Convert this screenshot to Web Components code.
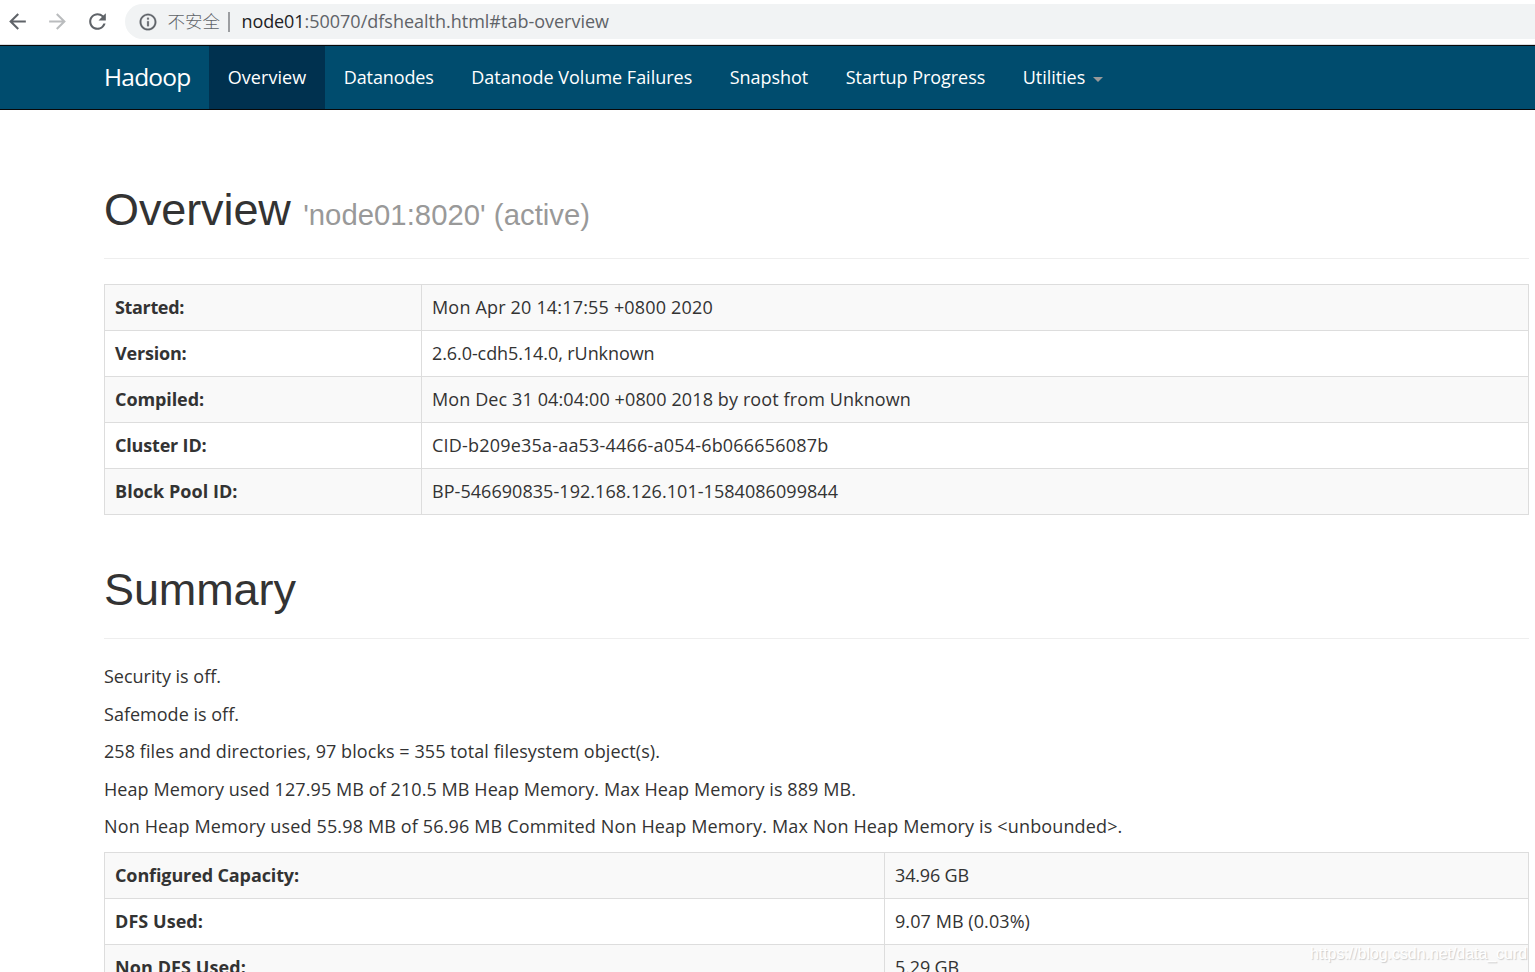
<!DOCTYPE html>
<html lang="en">
<head>
<meta charset="utf-8">
<title>Namenode information</title>
<style>
    html, body { margin: 0; height: 100%; overflow: hidden; background: #fff; }
    body {
        color: #333;
        font: 18px/25px "Open Sans", "Noto Sans", "Noto Sans CJK SC", sans-serif;
    }
</style>
</head>
<body>
<hdfs-app></hdfs-app>

<script>
// Inline text, tracked so that it fills the given width
class FitText extends HTMLElement {
    constructor() {
        super();
        this.attachShadow({ mode: 'open' });
        this.shadowRoot.innerHTML = '<style>:host { display: inline-block; white-space: nowrap; }</style><slot></slot>';
    }

    connectedCallback() {
        const target = parseFloat(this.getAttribute('width'));
        const length = this.textContent.length;
        if (!target || !length) return;
        this.style.letterSpacing = '0px';
        const natural = this.getBoundingClientRect().width;
        this.style.letterSpacing = `${(target - natural) / length}px`;
    }
}

// Browser toolbar: history buttons and address field
class BrowserBar extends HTMLElement {
    constructor() {
        super();
        this.attachShadow({ mode: 'open' });
        this.shadowRoot.innerHTML = `
            <style>
                :host {
                    display: flex;
                    height: 44px;
                    box-sizing: border-box;
                    padding: 4px 0 5px 5px;
                    background: #fff;
                }
                .buttons { display: flex; gap: 15px; align-items: center; width: 120px; flex: none; }
                .buttons svg { width: 25px; height: 25px; fill: #5f6368; flex: none; }
                .buttons .off { fill: #babcbe; }
                .address {
                    flex: 1;
                    display: flex;
                    align-items: center;
                    background: #f1f3f4;
                    border-radius: 17.5px 0 0 17.5px;
                    padding-left: 12.5px;
                    color: #5f6368;
                    line-height: 35px;
                    white-space: nowrap;
                }
                .address svg { width: 20px; height: 20px; fill: #5f6368; margin-right: 10px; }
                .warn { font: 300 17.5px/33px "Noto Sans CJK SC", sans-serif; padding-bottom: 2px; }
                .sep { width: 2px; height: 20px; background: #9c9ea1; margin: 0 11.5px 0 8px; }
                .host { color: #202124; }
            </style>
            <div class="buttons">
                <svg viewBox="0 0 24 24"><path d="M20 11H7.83l5.59-5.59L12 4l-8 8 8 8 1.41-1.41L7.83 13H20v-2z"/></svg>
                <svg class="off" viewBox="0 0 24 24"><path d="M12 4l-1.41 1.41L16.17 11H4v2h12.17l-5.58 5.59L12 20l8-8z"/></svg>
                <svg viewBox="0 0 24 24"><path d="M17.65 6.35A7.958 7.958 0 0 0 12 4c-4.42 0-7.99 3.58-7.99 8s3.57 8 7.99 8c3.73 0 6.84-2.55 7.73-6h-2.08A5.99 5.99 0 0 1 12 18c-3.31 0-6-2.69-6-6s2.69-6 6-6c1.66 0 3.14.69 4.22 1.78L13 11h7V4l-2.35 2.35z"/></svg>
            </div>
            <div class="address">
                <svg viewBox="0 0 24 24"><path d="M11 7h2v2h-2V7zm0 4h2v6h-2v-6zm1-9C6.48 2 2 6.48 2 12s4.48 10 10 10 10-4.48 10-10S17.52 2 12 2zm0 18c-4.41 0-8-3.59-8-8s3.59-8 8-8 8 3.59 8 8-3.59 8-8 8z" stroke="#5f6368" stroke-width=".3"/></svg>
                <span class="warn">不安全</span>
                <span class="sep"></span>
                <fit-text class="host" width="63">node01</fit-text><fit-text width="304.5">:50070/dfshealth.html#tab-overview</fit-text>
            </div>
        `;
    }
}

class NavItem extends HTMLElement {
    constructor() {
        super();
        this.attachShadow({ mode: 'open' });
        this.shadowRoot.innerHTML = `
            <style>
                :host {
                    display: flex;
                    align-items: center;
                    padding: 0 18.75px;
                    color: #fff;
                    white-space: nowrap;
                }
                :host([active]) { background: #00314f; }
                .caret { display: none; }
                :host([dropdown]) .caret {
                    display: block;
                    margin: 3px 0 0 7.5px;
                    border-top: 5px solid #999;
                    border-left: 5px solid transparent;
                    border-right: 5px solid transparent;
                }
            </style>
            <slot></slot><span class="caret"></span>
        `;
    }
}

class NavBar extends HTMLElement {
    constructor() {
        super();
        this.attachShadow({ mode: 'open' });
        this.shadowRoot.innerHTML = `
            <style>
                :host {
                    display: flex;
                    box-sizing: border-box;
                    height: 66px;
                    padding-left: 104px;
                    background: #004c6e;
                    border-top: 1px solid #dadce0;
                    border-bottom: 1px solid #080808;
                    box-shadow: inset 0 1px #080808;
                }
                .brand {
                    width: 105px;
                    font-size: 24.5px;
                    line-height: 63px;
                    color: #fff;
                }
                nav { display: flex; margin-top: 1px; }
            </style>
            <div class="brand"><fit-text width="86.5">Hadoop</fit-text></div>
            <nav>
                <nav-item active><fit-text width="78.5">Overview</fit-text></nav-item>
                <nav-item><fit-text width="90">Datanodes</fit-text></nav-item>
                <nav-item><fit-text width="221">Datanode Volume Failures</fit-text></nav-item>
                <nav-item><fit-text width="78.5">Snapshot</fit-text></nav-item>
                <nav-item><fit-text width="139.5">Startup Progress</fit-text></nav-item>
                <nav-item dropdown><fit-text width="62.5">Utilities</fit-text></nav-item>
            </nav>
        `;
    }
}

class PageHeader extends HTMLElement {
    constructor() {
        super();
        this.attachShadow({ mode: 'open' });
        this.shadowRoot.innerHTML = `
            <style>
                :host {
                    display: block;
                    padding-bottom: 11px;
                    margin: 50px 0 25px;
                    border-bottom: 1px solid #eee;
                }
                h1 {
                    margin: 0 0 12.5px;
                    font: 500 45px/49.5px "Liberation Sans", sans-serif;
                    letter-spacing: -.1px;
                }
                ::slotted(small) { font-size: 29.25px; line-height: 1; color: #999; }
            </style>
            <h1><slot></slot></h1>
        `;
    }
}

// Two-column striped table; "split" is the width of the label column
class InfoTable extends HTMLElement {
    constructor() {
        super();
        this.attachShadow({ mode: 'open' });
    }

    set rows(rows) {
        this.shadowRoot.innerHTML = `
            <style>
                :host { display: block; }
                table {
                    width: 100%;
                    border-collapse: collapse;
                    table-layout: fixed;
                    border: 1px solid #ddd;
                }
                th, td {
                    height: 25px;
                    padding: 10px;
                    border: 1px solid #ddd;
                    text-align: left;
                    line-height: 25px;
                }
                th { width: ${this.getAttribute('split')}px; box-sizing: content-box; font-weight: 700; }
                tr:nth-child(odd) { background: #f9f9f9; }
                fit-text { vertical-align: top; }
            </style>
            <table><tbody>
                ${rows.map(([label, lw, value, vw]) => `
                    <tr>
                        <th><fit-text width="${lw}">${label}</fit-text></th>
                        <td><fit-text width="${vw}">${value}</fit-text></td>
                    </tr>
                `).join('')}
            </tbody></table>
        `;
    }
}

const overviewRows = [
    ['Started:', 69, 'Mon Apr 20 14:17:55 +0800 2020', 281],
    ['Version:', 71.5, '2.6.0-cdh5.14.0, rUnknown', 222.5],
    ['Compiled:', 89, 'Mon Dec 31 04:04:00 +0800 2018 by root from Unknown', 479],
    ['Cluster ID:', 91.5, 'CID-b209e35a-aa53-4466-a054-6b066656087b', 396.5],
    ['Block Pool ID:', 122.5, 'BP-546690835-192.168.126.101-1584086099844', 406]
];

const summaryRows = [
    ['Configured Capacity:', 184, '34.96 GB', 74],
    ['DFS Used:', 88, '9.07 MB (0.03%)', 135],
    ['Non DFS Used:', 131, '5.29 GB', 64]
];

const summaryText = [
    ['Security is off.', 117],
    ['Safemode is off.', 135],
    ['258 files and directories, 97 blocks = 355 total filesystem object(s).', 556],
    ['Heap Memory used 127.95 MB of 210.5 MB Heap Memory. Max Heap Memory is 889 MB.', 752],
    ['Non Heap Memory used 55.98 MB of 56.96 MB Commited Non Heap Memory. Max Non Heap Memory is &lt;unbounded&gt;.', 1018.5]
];

class HdfsApp extends HTMLElement {
    constructor() {
        super();
        this.attachShadow({ mode: 'open' });
        this.shadowRoot.innerHTML = `
            <style>
                :host { display: block; position: relative; height: 100vh; overflow: hidden; }
                main { display: flow-root; padding: 25px 6px 0 104px; }
                p { margin: 0 0 12.5px; white-space: nowrap; }
                p fit-text { vertical-align: top; }
                .watermark {
                    position: absolute;
                    right: 8px;
                    bottom: 5px;
                    font: 16px/26px "Liberation Sans", sans-serif;
                    color: #fff;
                    text-shadow: 1px 1px 1px #ccc;
                }
            </style>
            <browser-bar></browser-bar>
            <nav-bar></nav-bar>
            <main>
                <page-header>Overview <small><fit-text width="287">'node01:8020' (active)</fit-text></small></page-header>
                <info-table id="overview" split="296"></info-table>
                <page-header>Summary</page-header>
                ${summaryText.map(([text, width]) => `<p><fit-text width="${width}">${text}</fit-text></p>`).join('')}
                <info-table id="summary" split="759"></info-table>
            </main>
            <div class="watermark"><fit-text width="217">https://blog.csdn.net/data_curd</fit-text></div>
        `;
        this.shadowRoot.querySelector('#overview').rows = overviewRows;
        this.shadowRoot.querySelector('#summary').rows = summaryRows;
    }
}

// Containers go first so that text is measured with its final styles
customElements.define('nav-item', NavItem);
customElements.define('nav-bar', NavBar);
customElements.define('browser-bar', BrowserBar);
customElements.define('page-header', PageHeader);
customElements.define('info-table', InfoTable);
customElements.define('hdfs-app', HdfsApp);
customElements.define('fit-text', FitText);
</script>
</body>
</html>
